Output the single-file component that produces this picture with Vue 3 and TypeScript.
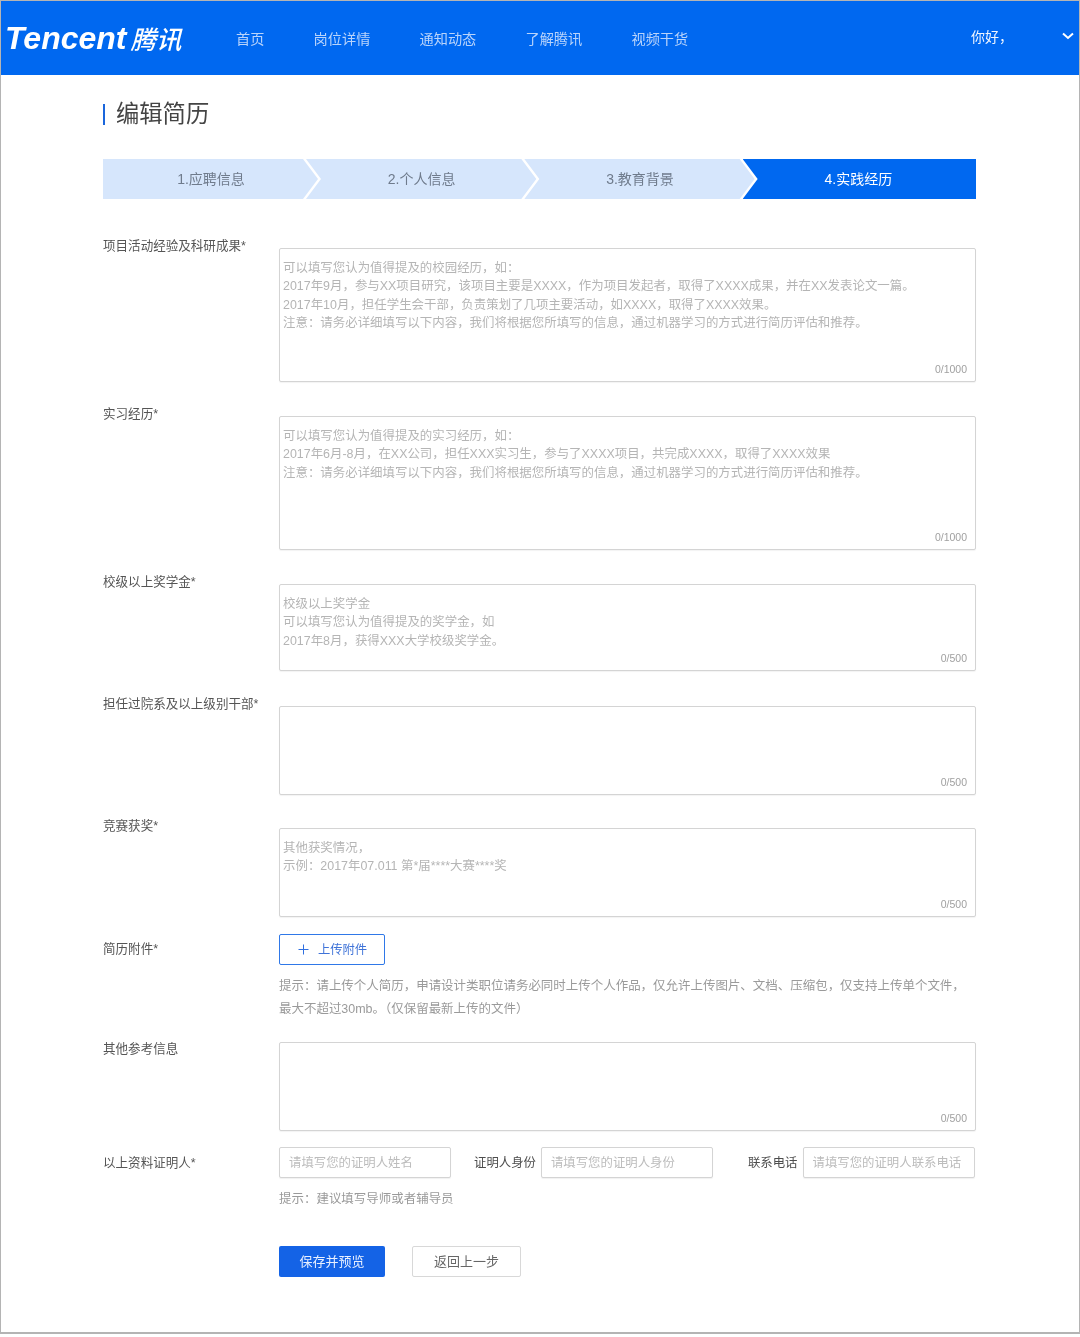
<script setup lang="ts">
interface Field {
  label: string
  height: number
  gap: number
  text: string
  limit: number
}

const nav: string[] = ['首页', '岗位详情', '通知动态', '了解腾讯', '视频干货']
const steps: string[] = ['1.应聘信息', '2.个人信息', '3.教育背景', '4.实践经历']
const note = '注意：请务必详细填写以下内容，我们将根据您所填写的信息，通过机器学习的方式进行简历评估和推荐。'

const topFields: Field[] = [
  {
    label: '项目活动经验及科研成果*', height: 134, gap: 49, limit: 1000,
    text: `可以填写您认为值得提及的校园经历，如：\n2017年9月，参与XX项目研究，该项目主要是XXXX，作为项目发起者，取得了XXXX成果，并在XX发表论文一篇。\n2017年10月，担任学生会干部，负责策划了几项主要活动，如XXXX，取得了XXXX效果。\n${note}`,
  },
  {
    label: '实习经历*', height: 134, gap: 34, limit: 1000,
    text: `可以填写您认为值得提及的实习经历，如：\n2017年6月-8月，在XX公司，担任XXX实习生，参与了XXXX项目，共完成XXXX，取得了XXXX效果\n${note}`,
  },
  {
    label: '校级以上奖学金*', height: 87, gap: 34, limit: 500,
    text: '校级以上奖学金\n可以填写您认为值得提及的奖学金，如\n2017年8月，获得XXX大学校级奖学金。',
  },
  { label: '担任过院系及以上级别干部*', height: 89, gap: 35, limit: 500, text: '' },
  {
    label: '竞赛获奖*', height: 89, gap: 33, limit: 500,
    text: '其他获奖情况，\n示例：2017年07.011 第*届****大赛****奖',
  },
]
</script>

<template>
  <div class="frame">
    <header class="header">
      <div class="logo"><span class="logo-en">Tencent</span><span class="logo-cn">腾讯</span></div>
      <nav class="nav">
        <a v-for="item in nav" :key="item" class="nav-item">{{ item }}</a>
      </nav>
      <div class="user">你好，</div>
      <svg class="caret" width="12" height="8" viewBox="0 0 12 8">
        <path d="M1 1.5 6 6l5-4.5" fill="none" stroke="#fff" stroke-width="2" />
      </svg>
    </header>

    <main class="main">
      <h1 class="title">编辑简历</h1>

      <ol class="steps">
        <li
          v-for="(step, i) in steps"
          :key="step"
          class="step"
          :class="{ first: i === 0, active: i === 3 }"
        >{{ step }}</li>
      </ol>

      <form class="form" @submit.prevent>
        <div
          v-for="f in topFields"
          :key="f.label"
          class="row"
          :style="{ marginTop: f.gap + 'px' }"
        >
          <label class="label label-up">{{ f.label }}</label>
          <div class="box" :style="{ height: f.height + 'px' }">
            <textarea class="area" :placeholder="f.text"></textarea>
            <span class="count">0/{{ f.limit }}</span>
          </div>
        </div>

        <div class="row row-upload">
          <label class="label label-upload">简历附件*</label>
          <div>
            <button type="button" class="upload">
              <svg width="11" height="11" viewBox="0 0 11 11">
                <path d="M5.5 0.5v10M0.5 5.5h10" stroke="#2f6fe0" stroke-width="1" fill="none" />
              </svg>
              <span>上传附件</span>
            </button>
            <p class="hint hint-upload">提示：请上传个人简历，申请设计类职位请务必同时上传个人作品，仅允许上传图片、文档、压缩包，仅支持上传单个文件，<br />最大不超过30mb。（仅保留最新上传的文件）</p>
          </div>
        </div>

        <div class="row row-other">
          <label class="label label-other">其他参考信息</label>
          <div class="box" style="height: 89px">
            <textarea class="area"></textarea>
            <span class="count">0/500</span>
          </div>
        </div>

        <div class="row row-witness">
          <label class="label label-witness">以上资料证明人*</label>
          <div>
            <div class="witness">
              <input class="input" placeholder="请填写您的证明人姓名" />
              <label class="sub sub-id">证明人身份</label>
              <input class="input" placeholder="请填写您的证明人身份" />
              <label class="sub sub-tel">联系电话</label>
              <input class="input" placeholder="请填写您的证明人联系电话" />
            </div>
            <p class="hint hint-witness">提示：建议填写导师或者辅导员</p>
          </div>
        </div>

        <div class="actions">
          <button type="submit" class="btn primary">保存并预览</button>
          <button type="button" class="btn ghost">返回上一步</button>
        </div>
      </form>
    </main>
  </div>
</template>

<style>
html,
body {
  margin: 0;
  background: #fff;
}
</style>

<style scoped>
* {
  box-sizing: border-box;
}
.frame {
  height: 1334px;
  border: 1px solid #b4b4b4;
  border-bottom-width: 2px;
  background: #fff;
  font-family: "Liberation Sans", "Noto Sans CJK SC", sans-serif;
  overflow: hidden;
  filter: blur(0.3px);
}
.header {
  height: 74px;
  background: #0068f0;
  display: flex;
  align-items: center;
  color: #fff;
  position: relative;
}
.logo {
  width: 235px;
  flex: none;
  padding-left: 4px;
  display: flex;
  align-items: center;
  white-space: nowrap;
  margin-top: -1px;
}
.logo-en {
  font-family: "Liberation Sans", sans-serif;
  font-style: italic;
  font-weight: 700;
  font-size: 32px;
  line-height: 40px;
}
.logo-cn {
  font-family: "Noto Sans CJK SC", sans-serif;
  font-style: italic;
  font-weight: 500;
  font-size: 25.5px;
  line-height: 40px;
  margin-left: 4px;
}
.nav {
  display: flex;
  gap: 49.2px;
  font-size: 14.2px;
  color: #b9d4fb;
  margin-top: 2px;
}
.nav-item {
  line-height: 20px;
  white-space: nowrap;
}
.user {
  margin-left: auto;
  margin-right: 64px;
  margin-top: -2px;
  font-size: 14px;
  line-height: 20px;
  width: 44px;
  color: #f0f6ff;
}
.caret {
  position: absolute;
  right: 5px;
  top: 31px;
}
.main {
  padding: 0 103px 0 102px;
}
.title {
  margin: 29px 0 0;
  height: 21px;
  border-left: 2px solid #1a66dc;
  padding-left: 11px;
  font-size: 23.3px;
  font-weight: 400;
  line-height: 21px;
  color: #444;
  white-space: nowrap;
}
.steps {
  list-style: none;
  margin: 34px 0 0;
  padding: 0;
  height: 40px;
  display: flex;
}
.step {
  flex: 1;
  margin-left: -15px;
  padding-right: 2px;
  background: #d6e6fc;
  color: #6f7b8c;
  font-size: 14px;
  line-height: 40px;
  text-align: center;
  clip-path: polygon(0 0, calc(100% - 18px) 0, calc(100% - 3px) 50%, calc(100% - 18px) 100%, 0 100%, 15px 50%);
}
.step.first {
  flex: none;
  width: 218px;
  margin-left: 0;
  clip-path: polygon(0 0, calc(100% - 18px) 0, calc(100% - 3px) 50%, calc(100% - 18px) 100%, 0 100%);
}
.step.active {
  background: #0068f0;
  color: #fff;
  clip-path: polygon(0 0, 100% 0, 100% 100%, 0 100%, 15px 50%);
}
.form {
  color: #555;
}
.row {
  display: grid;
  grid-template-columns: 176px 1fr;
}
.label {
  display: block;
  font-size: 12.55px;
  line-height: 20px;
  color: #555;
  white-space: nowrap;
}
.label-up {
  margin-top: -12px;
}
.box {
  position: relative;
  border: 1px solid #d4d4d4;
  border-radius: 2px;
  box-shadow: 0 1px 1px rgba(0, 0, 0, 0.05);
  background: #fff;
}
.area {
  display: block;
  width: 100%;
  height: 100%;
  border: 0;
  outline: 0;
  resize: none;
  padding: 10px 3px 0;
  background: transparent;
  font: inherit;
  font-size: 12.45px;
  line-height: 18.3px;
  overflow: hidden;
}
.area::placeholder {
  color: #b5b5b5;
  opacity: 1;
}
.count {
  position: absolute;
  right: 8px;
  bottom: 5px;
  font-size: 10.5px;
  line-height: 14px;
  color: #a0a0a0;
}
.row-upload {
  margin-top: 17px;
}
.label-upload {
  margin-top: 5px;
}
.upload {
  display: flex;
  align-items: center;
  justify-content: center;
  gap: 9px;
  width: 106px;
  height: 31px;
  padding: 0 0 1px 1px;
  background: #fff;
  border: 1px solid #2f78e8;
  border-radius: 2px;
  color: #3f73d8;
  font: inherit;
  font-size: 12.3px;
}
.hint {
  margin: 0;
  font-size: 12.48px;
  line-height: 23px;
  color: #9a9a9a;
  white-space: nowrap;
}
.hint-upload {
  margin-top: 10px;
}
.row-other {
  margin-top: 21px;
}
.label-other {
  margin-top: -3px;
}
.row-witness {
  margin-top: 16px;
}
.label-witness {
  margin-top: 6px;
}
.witness {
  display: flex;
  align-items: center;
}
.input {
  width: 172px;
  height: 31px;
  flex: none;
  border: 1px solid #d4d4d4;
  border-radius: 2px;
  box-shadow: 0 1px 1px rgba(0, 0, 0, 0.06);
  padding: 0 9px;
  outline: 0;
  background: #fff;
  font: inherit;
  font-size: 12.4px;
}
.input::placeholder {
  color: #bcbcbc;
  opacity: 1;
}
.sub {
  font-size: 12.4px;
  color: #4d4d4d;
  white-space: nowrap;
  margin-top: -2px;
}
.sub-id {
  margin-left: 23px;
  margin-right: 5px;
}
.sub-tel {
  margin-left: 35px;
  margin-right: 5px;
}
.hint-witness {
  margin-top: 10px;
}
.actions {
  display: flex;
  gap: 27px;
  margin: 35px 0 0 176px;
}
.btn {
  height: 31px;
  border-radius: 2px;
  font: inherit;
  font-size: 13px;
  padding: 0 0 2px;
}
.primary {
  width: 106px;
  background: #1463e6;
  border: 0;
  color: #e8f0ff;
}
.ghost {
  width: 109px;
  background: #fff;
  border: 1px solid #d8d8d8;
  color: #666;
}
</style>
